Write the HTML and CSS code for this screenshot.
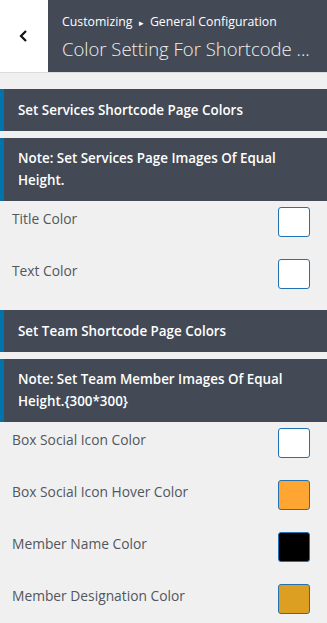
FILE: index.html
```html
<!DOCTYPE html>
<html>
<head>
  <title>Customizing</title>
  <meta name="viewport" content="width=device-width, initial-scale=1.0">
  <link rel="stylesheet" href="styles.css">
</head>
<body>

  <header class="panel-head">
    <button class="back" aria-label="Back">
      <svg width="12" height="14" viewBox="0 0 12 14"><path d="M8 2 L3 7 L8 12" fill="none" stroke="#111" stroke-width="2.2"/></svg>
    </button>
    <div class="head-text">
      <div class="crumb">Customizing <span class="arrow">&#9656;</span> General Configuration</div>
      <div class="title">Color Setting For Shortcode ...</div>
    </div>
  </header>

  <div class="group first">
    <div class="bar">Set Services Shortcode Page Colors</div>
    <div class="bar note">Note: Set Services Page Images Of Equal Height.</div>
    <div class="row"><span>Title Color</span><span class="swatch" style="background:#ffffff"></span></div>
    <div class="row"><span>Text Color</span><span class="swatch" style="background:#ffffff"></span></div>
  </div>

  <div class="group">
    <div class="bar">Set Team Shortcode Page Colors</div>
    <div class="bar note">Note: Set Team Member Images Of Equal Height.{300*300}</div>
    <div class="row"><span>Box Social Icon Color</span><span class="swatch" style="background:#ffffff"></span></div>
    <div class="row"><span>Box Social Icon Hover Color</span><span class="swatch" style="background:#ffa632"></span></div>
    <div class="row"><span>Member Name Color</span><span class="swatch" style="background:#000000"></span></div>
    <div class="row"><span>Member Designation Color</span><span class="swatch" style="background:#dd9f22"></span></div>
  </div>

</body>
</html>
```

FILE: styles.css
```css
body { margin: 0; background: #f0f0f0; font-family: "Open Sans", "Noto Sans", sans-serif; overflow: hidden; }

.panel-head { display: flex; height: 72px; border-bottom: 1px solid #dcdcde; }
.back { width: 48px; border: none; background: #fff; padding: 0; display: flex; align-items: center; justify-content: center; }
.head-text { flex: 1; min-width: 0; background: #434a56; color: #f0f0f0; padding: 12px 8px 0 14px; }
.crumb { font-size: 12.3px; line-height: 20px; color: #fff; }
.crumb .arrow { font-size: 9px; margin: 0 3px; }
.title { font-size: 18.5px; font-weight: 300; line-height: 32px; white-space: nowrap; }

.group { margin-top: 5px; }
.group.first { margin-top: 16px; }
.bar {
  background: #434a56; color: #fff;
  border-left: 4px solid #0073aa;
  padding: 10px 14px;
  font-size: 13.4px; font-weight: 600; line-height: 22px;
}
.bar.note { margin-top: 7px; padding: 9px 30px 10px 14px; }

.row { display: flex; justify-content: space-between; align-items: flex-start; padding: 6px 17px 16px 12px; }
.row span:first-child { font-size: 13.8px; line-height: 24px; color: #50575e; }
.swatch { width: 30px; height: 28px; border: 1px solid #2271b1; border-radius: 3px; }
```
